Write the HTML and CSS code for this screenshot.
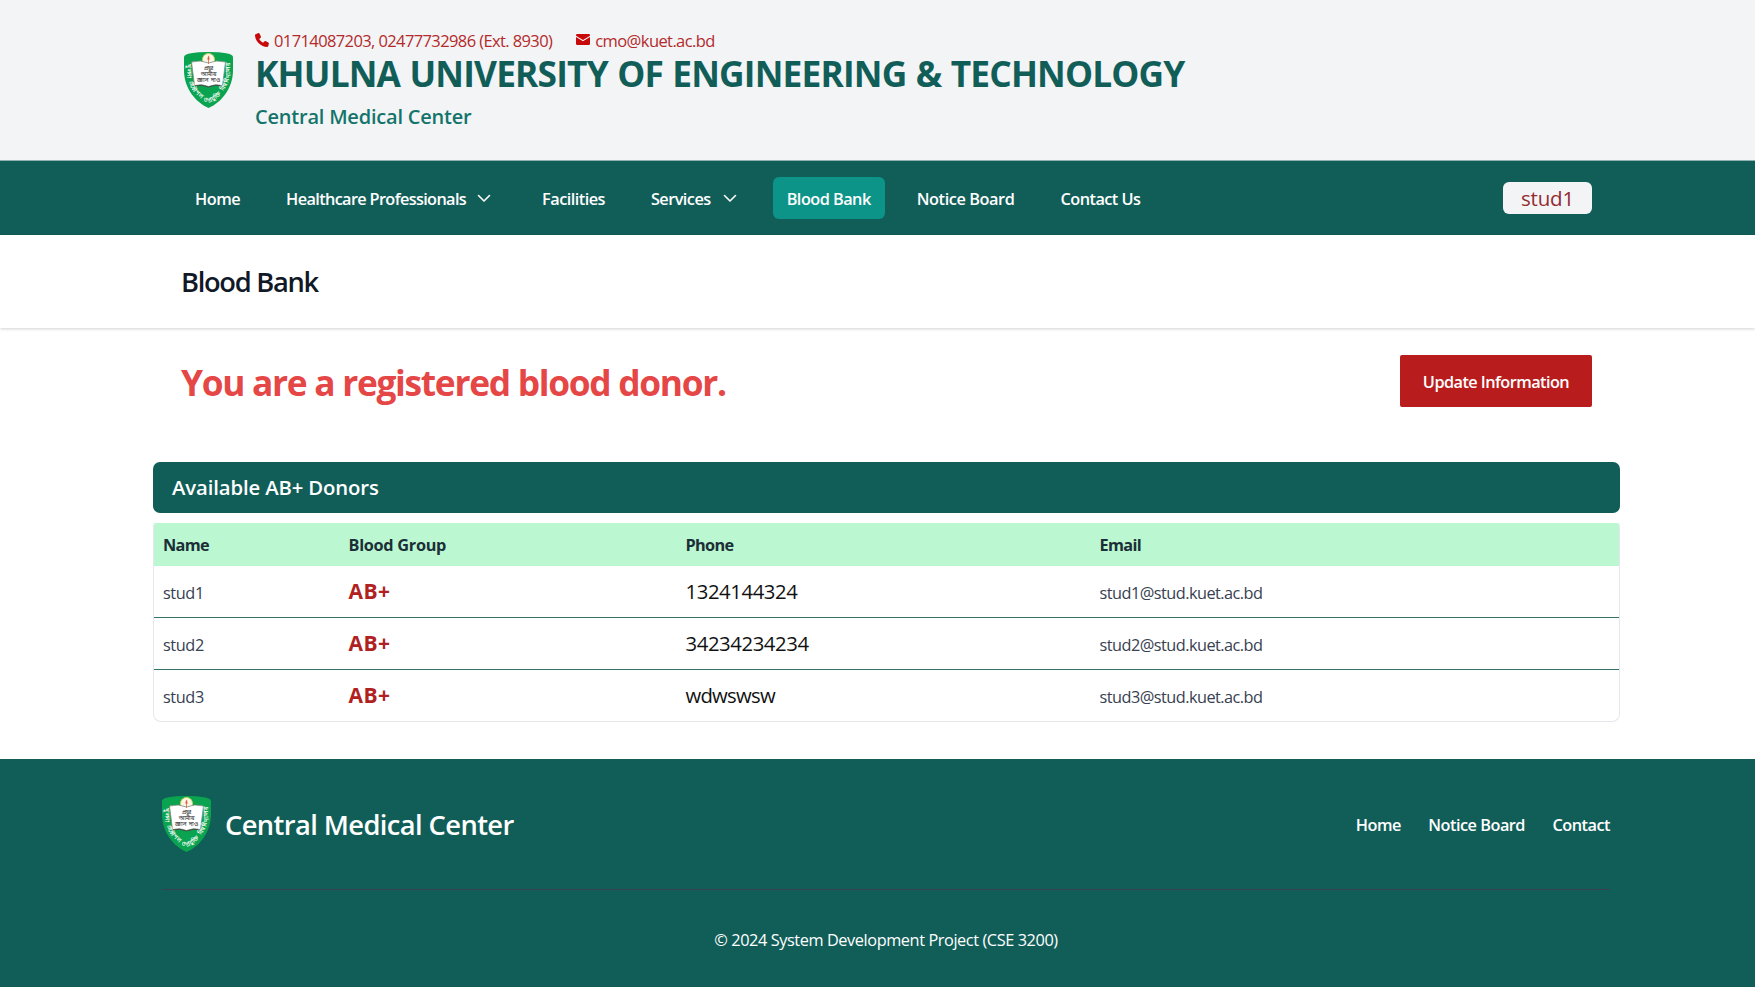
FILE: index.html
```html
<!DOCTYPE html>
<html lang="en">
<head>
<meta charset="utf-8">
<title>Blood Bank</title>
<link rel="stylesheet" href="styles.css">
</head>
<body>
<svg class="sprite" aria-hidden="true">
  <defs>
    <symbol id="crest" viewBox="0 0 49 56" preserveAspectRatio="none">
      <path d="M0 4.500Q2 0 24.500 0T49 4.500V18C49 36 38 50 24.500 56C11 50 0 36 0 18Z" fill="#0aa34f"/>
      <circle cx="24.500" cy="7.500" r="6" fill="#fff6e3" stroke="#c9d65b" stroke-width="1"/>
      <path d="M7.500 10Q17 7.500 24.500 11Q32 7.500 41.500 10L38.500 33.500Q31 31.500 24.500 34.500Q18 31.500 10.500 33.500Z" fill="#fff" stroke="#7e8b80" stroke-width=".8"/>
      <path d="M10.500 34Q18 32 24.500 35Q31 32 38.500 34" fill="none" stroke="#454b46" stroke-width="1"/>
      <path d="M24.500 3.500Q26.500 7 24.500 9Q22.500 7 24.500 3.500ZM24.100 9h.8v3h-.8z" fill="#d8604e"/>
      <g class="crest-motto">
        <text x="24.500" y="18">প্রভু!</text>
        <text x="24.500" y="24">আমায়</text>
        <text x="24.500" y="30">জ্ঞান দাও</text>
      </g>
      <path id="rim" d="M2.600 12V18C3 34 12 45 24.500 51.500C37 45 46 34 46.400 18V11" fill="none"/>
      <text class="crest-rim"><textPath href="#rim" textLength="98">খুলনা প্রকৌশল ও প্রযুক্তি বিশ্ববিদ্যালয়</textPath></text>
    </symbol>
    <symbol id="chevron" viewBox="0 0 22 22">
      <path d="M5.500 8.500L11 14L16.500 8.500" fill="none" stroke="currentColor" stroke-width="1.600" stroke-linecap="round" stroke-linejoin="round"/>
    </symbol>
    <symbol id="phone" viewBox="0 0 14 14">
      <path d="M.8 1.200L3.400 .1Q4.200-.1 4.600 .7L5.900 3.500Q6.200 4.200 5.600 4.700L4.200 5.900Q5.500 8.500 8.100 9.800L9.300 8.400Q9.800 7.800 10.500 8.100L13.300 9.400Q14.100 9.800 13.900 10.600L13.200 13.200Q13 14 12.200 14Q7.400 14 3.700 10.300T0 2Q0 1.500 .8 1.200Z" fill="currentColor"/>
    </symbol>
    <symbol id="mail" viewBox="0 0 14 11">
      <path d="M1.200 0H12.800Q14 0 14 1.200V1.700L7 6L0 1.700V1.200Q0 0 1.200 0ZM0 2.900L7 7.200L14 2.900V9.800Q14 11 12.800 11H1.200Q0 11 0 9.800Z" fill="currentColor"/>
    </symbol>
  </defs>
</svg>

<header class="masthead">
  <svg class="crest"><use href="#crest"/></svg>
  <div class="masthead-text">
    <div class="contacts">
      <svg class="icon-phone"><use href="#phone"/></svg>
      <span class="contact-phone">01714087203, 02477732986 (Ext. 8930)</span>
      <svg class="icon-mail"><use href="#mail"/></svg>
      <span class="contact-mail">cmo@kuet.ac.bd</span>
    </div>
    <h1 class="university">KHULNA UNIVERSITY OF ENGINEERING &amp; TECHNOLOGY</h1>
    <div class="unit">Central Medical Center</div>
  </div>
</header>

<nav class="navbar">
  <a class="nav-link nav-home">Home</a>
  <a class="nav-link nav-staff">Healthcare Professionals<svg class="chevron"><use href="#chevron"/></svg></a>
  <a class="nav-link">Facilities</a>
  <a class="nav-link">Services<svg class="chevron"><use href="#chevron"/></svg></a>
  <a class="nav-link active">Blood Bank</a>
  <a class="nav-link nav-notice">Notice Board</a>
  <a class="nav-link">Contact Us</a>
  <a class="user">stud1</a>
</nav>

<section class="page-title"><h2>Blood Bank</h2></section>

<main>
  <div class="status">
    <p class="status-text">You are a registered blood donor.</p>
    <button class="update" type="button">Update Information</button>
  </div>
  <h3 class="panel-title">Available AB+ Donors</h3>
  <div class="table-wrap">
    <table class="donors">
      <colgroup><col class="c-name"><col class="c-group"><col class="c-phone"><col></colgroup>
      <thead><tr><th class="t-name">Name</th><th class="t-group">Blood Group</th><th>Phone</th><th>Email</th></tr></thead>
      <tbody>
        <tr><td class="small name">stud1</td><td class="group">AB+</td><td class="num">1324144324</td><td class="small">stud1@stud.kuet.ac.bd</td></tr>
        <tr><td class="small name">stud2</td><td class="group">AB+</td><td class="num">34234234234</td><td class="small">stud2@stud.kuet.ac.bd</td></tr>
        <tr><td class="small name">stud3</td><td class="group">AB+</td><td class="word">wdwswsw</td><td class="small">stud3@stud.kuet.ac.bd</td></tr>
      </tbody>
    </table>
  </div>
</main>

<footer class="footer">
  <div class="footer-top">
    <svg class="crest"><use href="#crest"/></svg>
    <span class="footer-name">Central Medical Center</span>
    <div class="footer-links">
      <a>Home</a><a>Notice Board</a><a>Contact</a>
    </div>
  </div>
  <p class="copyright">© 2024 System Development Project (CSE 3200)</p>
</footer>
</body>
</html>
```
FILE: styles.css
```css
* { box-sizing: border-box; }

body {
  margin: 0;
  background: #fff;
  color: #111;
  font-family: "Open Sans", "Noto Sans", sans-serif;
  overflow-x: hidden;
}

h1, h2, h3, p { margin: 0; }

.sprite { position: absolute; width: 0; height: 0; }

.crest { width: 49px; height: 56px; flex: none; }
.crest-motto { font-size: 5.6px; font-weight: 700; fill: #444; text-anchor: middle; }
.crest-rim { font-size: 5.8px; font-weight: 700; fill: #fff; }

/* Masthead */
.masthead {
  display: flex;
  height: 161px;
  padding: 27px 0 0 184px;
  background: #f3f4f6;
  border-bottom: 1px solid #8fb2b0;
}
.masthead .crest { margin-top: 25px; }
.masthead-text { margin-left: 22px; }
.contacts {
  display: flex;
  align-items: center;
  height: 26px;
  font-size: 16.5px;
  color: #b42a2a;
}
.contacts svg { color: #c70909; }
.icon-phone { width: 14px; height: 14px; margin: 0 5px 1px 0; }
.contact-phone { letter-spacing: -.609px; }
.icon-mail { width: 14px; height: 11px; margin: 0 5px 1px 24px; }
.contact-mail { letter-spacing: -.59px; }
.university {
  line-height: 40px;
  font-size: 35.3px;
  letter-spacing: -.83px;
  word-spacing: 1px;
  color: #115e59;
  white-space: nowrap;
}
.unit {
  margin-top: 9px;
  line-height: 30px;
  font-size: 20px;
  font-weight: 600;
  letter-spacing: -.211px;
  color: #14746b;
}

/* Navigation */
.navbar {
  display: flex;
  align-items: center;
  gap: 18px;
  height: 74px;
  padding: 0 163px 0 181px;
  background: #115e59;
}
.nav-link {
  display: flex;
  align-items: center;
  height: 42px;
  padding: 2px 14px 0;
  border-radius: 6px;
  font-size: 16.3px;
  font-weight: 600;
  letter-spacing: -.53px;
  color: #fff;
  white-space: nowrap;
}
.nav-home { letter-spacing: -.5px; }
.nav-staff { letter-spacing: -.64px; }
.nav-notice { letter-spacing: -.41px; }
.active { background: #0d9488; }
.chevron { width: 22px; height: 22px; margin: 0 0 2px 8px; }
.nav-staff .chevron { margin: 0 1px 2px 7px; }
.user {
  display: flex;
  align-items: center;
  justify-content: center;
  width: 89px;
  height: 32px;
  margin-left: auto;
  border-radius: 6px;
  background: #f3f4f6;
  font-size: 20.5px;
  letter-spacing: -.2px;
  color: #942a30;
}

/* Page title */
.page-title {
  height: 93px;
  padding-left: 181px;
  box-shadow: 0 1px 3px rgba(0, 0, 0, .18);
}
.page-title h2 {
  line-height: 94px;
  font-size: 27.3px;
  font-weight: 600;
  letter-spacing: -1.298px;
  color: #111827;
}

/* Content */
main { padding: 27px 135px 0 153px; }
.status {
  display: flex;
  justify-content: space-between;
  align-items: center;
  padding: 0 28px;
}
.status-text {
  padding-top: 2px;
  font-size: 35.3px;
  font-weight: 700;
  line-height: 50px;
  letter-spacing: -1.294px;
  color: #e54646;
}
.update {
  width: 192px;
  height: 52px;
  padding: 1px 0 0;
  border: 0;
  border-radius: 2px;
  background: #b91c1c;
  font: 600 16.3px "Open Sans", sans-serif;
  letter-spacing: -.554px;
  color: #fff;
}
.panel-title {
  height: 51px;
  margin-top: 55px;
  padding-left: 19px;
  border-radius: 7px;
  background: #115e59;
  line-height: 51px;
  font-size: 20.3px;
  font-weight: 600;
  letter-spacing: -.117px;
  color: #fff;
}
.table-wrap {
  margin-top: 10px;
  border: 1px solid #e5e7eb;
  border-top: 0;
  border-radius: 3px 3px 8px 8px;
  overflow: hidden;
}
.donors {
  width: 100%;
  table-layout: fixed;
  border-collapse: separate;
  border-spacing: 0;
}
.c-name { width: 185px; }
.c-group { width: 337px; }
.c-phone { width: 414px; }
.donors th, .donors td { padding: 0 0 0 9.5px; text-align: left; }
.donors th {
  height: 43px;
  background: #bbf7d0;
  font-size: 16.3px;
  letter-spacing: -.65px;
  color: #1b2f38;
}
.donors th.t-name { padding-left: 9px; }
.donors th.t-group { letter-spacing: -.3px; }
.donors td {
  height: 52px;
  padding-bottom: 1px;
  border-bottom: 1px solid #33736a;
  font-size: 20.3px;
}
.donors tr:last-child td { height: 51px; border-bottom: 0; }
.donors td.small { padding-top: 2px; padding-bottom: 0; font-size: 16.3px; letter-spacing: -.527px; color: #374151; }
.donors td.name { padding-left: 9px; letter-spacing: -.4px; }
.donors .group { font-size: 21px; font-weight: 700; letter-spacing: .4px; color: #b02222; }
.donors .num { letter-spacing: -.4px; }
.donors .word { letter-spacing: -.75px; }

/* Footer */
.footer {
  height: 228px;
  margin-top: 37px;
  padding: 37px 145px 0 162px;
  background: #115e59;
  color: #fff;
}
.footer-top {
  display: flex;
  align-items: flex-start;
  height: 94px;
  border-bottom: 1px solid #374151;
}
.footer-name {
  margin-left: 14px;
  line-height: 58px;
  font-size: 27.3px;
  font-weight: 600;
  letter-spacing: -.593px;
}
.footer-links {
  display: flex;
  gap: 27.5px;
  margin-left: auto;
  line-height: 58px;
  font-size: 16.3px;
  font-weight: 600;
  letter-spacing: -.5px;
}
.copyright {
  line-height: 100px;
  text-align: center;
  font-size: 16.3px;
  letter-spacing: -.407px;
}
```
